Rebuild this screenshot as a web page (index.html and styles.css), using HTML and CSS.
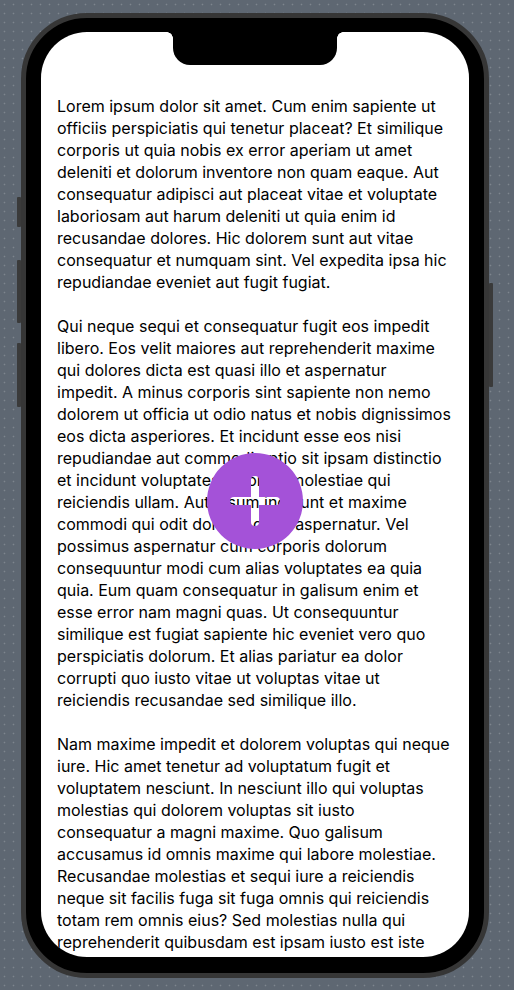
FILE: index.html
```html
<!DOCTYPE html>
<html lang="en">
<head>
<meta charset="utf-8">
<title>Phone preview</title>
<link rel="stylesheet" href="styles.css">
</head>
<body>
<div class="stage">
  <div class="phone">
    <span class="btn btn-mute"></span>
    <span class="btn btn-vol-up"></span>
    <span class="btn btn-vol-down"></span>
    <span class="btn btn-power"></span>
    <div class="screen">
      <div class="notch"></div>
      <main class="content">
        <p>Lorem ipsum dolor sit amet. Cum enim sapiente ut<br>
officiis perspiciatis qui tenetur placeat? Et similique<br>
corporis ut quia nobis ex error aperiam ut amet<br>
deleniti et dolorum inventore non quam eaque. Aut<br>
consequatur adipisci aut placeat vitae et voluptate<br>
laboriosam aut harum deleniti ut quia enim id<br>
recusandae dolores. Hic dolorem sunt aut vitae<br>
consequatur et numquam sint. Vel expedita ipsa hic<br>
repudiandae eveniet aut fugit fugiat.</p>
        <p>Qui neque sequi et consequatur fugit eos impedit<br>
libero. Eos velit maiores aut reprehenderit maxime<br>
qui dolores dicta est quasi illo et aspernatur<br>
impedit. A minus corporis sint sapiente non nemo<br>
dolorem ut officia ut odio natus et nobis dignissimos<br>
eos dicta asperiores. Et incidunt esse eos nisi<br>
repudiandae aut commodi optio sit ipsam distinctio<br>
et incidunt voluptates dolorem molestiae qui<br>
reiciendis ullam. Aut ipsum incidunt et maxime<br>
commodi qui odit dolores quae aspernatur. Vel<br>
possimus aspernatur cum corporis dolorum<br>
consequuntur modi cum alias voluptates ea quia<br>
quia. Eum quam consequatur in galisum enim et<br>
esse error nam magni quas. Ut consequuntur<br>
similique est fugiat sapiente hic eveniet vero quo<br>
perspiciatis dolorum. Et alias pariatur ea dolor<br>
corrupti quo iusto vitae ut voluptas vitae ut<br>
reiciendis recusandae sed similique illo.</p>
        <p>Nam maxime impedit et dolorem voluptas qui neque<br>
iure. Hic amet tenetur ad voluptatum fugit et<br>
voluptatem nesciunt. In nesciunt illo qui voluptas<br>
molestias qui dolorem voluptas sit iusto<br>
consequatur a magni maxime. Quo galisum<br>
accusamus id omnis maxime qui labore molestiae.<br>
Recusandae molestias et sequi iure a reiciendis<br>
neque sit facilis fuga sit fuga omnis qui reiciendis<br>
totam rem omnis eius? Sed molestias nulla qui<br>
reprehenderit quibusdam est ipsam iusto est iste<br>
nulla nihil quae dolorum voluptatem? Et ratione<br>
dolorum ut quia aliquam non internos dolores.</p>
      </main>
      <button class="fab" type="button" aria-label="Add">
        <svg viewBox="0 0 96 96" width="96" height="96" aria-hidden="true">
          <path fill-rule="evenodd" d="M48 0A48 48 0 1 1 48 96A48 48 0 1 1 48 0Z M44 27A4 4 0 0 1 52 27V44H69A4 4 0 0 1 69 52H52V69A4 4 0 0 1 44 69V52H27A4 4 0 0 1 27 44H44Z"/>
        </svg>
      </button>
    </div>
  </div>
</div>
</body>
</html>
```

FILE: styles.css
```css
html, body {
  margin: 0;
  padding: 0;
}

body {
  width: 514px;
  height: 990px;
  overflow: hidden;
  background-color: #5e6772;
  background-image: radial-gradient(circle, rgba(255, 255, 255, 0.2) 0.7px, transparent 1.1px);
  background-size: 9px 9px;
  font-family: Inter, "Noto Sans", "Liberation Sans", sans-serif;
}

.stage {
  display: flex;
  padding: 13px 0 0 21px;
}

.phone {
  position: relative;
  box-sizing: border-box;
  width: 468px;
  height: 965px;
  border: 5px solid #363636;
  border-radius: 66px;
  background: #000;
  padding: 14px 15px 16px 15px;
}

.btn {
  position: absolute;
  width: 4px;
  background: #3a3a3a;
  border-radius: 1px;
}

.btn-mute { left: -9px; top: 179px; height: 30px; }
.btn-vol-up { left: -9px; top: 242px; height: 63px; }
.btn-vol-down { left: -9px; top: 325px; height: 64px; }
.btn-power { right: -9px; top: 265px; height: 104px; }

.screen {
  position: relative;
  height: 925px;
  background: #fff;
  border-radius: 46px;
  overflow: hidden;
}

.notch {
  position: absolute;
  top: 0;
  left: 132px;
  width: 164px;
  height: 33px;
  background: #000;
  border-radius: 0 0 17px 17px;
}

.notch::before,
.notch::after {
  content: "";
  position: absolute;
  top: 0;
  width: 6px;
  height: 6px;
}

.notch::before {
  left: -6px;
  background: radial-gradient(circle at 0 100%, transparent 5.5px, #000 6px);
}

.notch::after {
  right: -6px;
  background: radial-gradient(circle at 100% 100%, transparent 5.5px, #000 6px);
}

.content {
  padding: 63px 0 0 16px;
  color: #000;
  font-size: 16px;
  line-height: 22px;
}

.content p {
  margin: 0 0 22px 0;
  white-space: nowrap;
}

.fab {
  position: absolute;
  left: 166px;
  top: 421px;
  width: 96px;
  height: 96px;
  padding: 0;
  border: 0;
  background: transparent;
  cursor: pointer;
}

.fab svg {
  display: block;
  fill: #a452d8;
}
```
